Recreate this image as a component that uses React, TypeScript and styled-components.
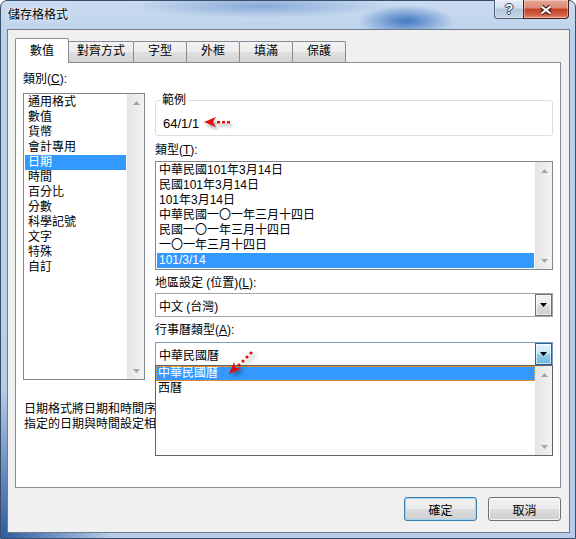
import styled, { createGlobalStyle } from "styled-components";

const GlobalStyle = createGlobalStyle`
  html, body {
    margin: 0;
    padding: 0;
    background: #fff;
  }
  body {
    width: 576px;
    height: 539px;
    overflow: hidden;
    font-family: "Liberation Sans", "Noto Sans CJK TC", sans-serif;
    font-size: 12px;
    color: #000;
  }
  * {
    box-sizing: border-box;
  }
`;

const tabs = ["數值", "對齊方式", "字型", "外框", "填滿", "保護"];

const categories = [
  "通用格式",
  "數值",
  "貨幣",
  "會計專用",
  "日期",
  "時間",
  "百分比",
  "分數",
  "科學記號",
  "文字",
  "特殊",
  "自訂",
];

const dateTypes = [
  "中華民國101年3月14日",
  "民國101年3月14日",
  "101年3月14日",
  "中華民國一〇一年三月十四日",
  "民國一〇一年三月十四日",
  "一〇一年三月十四日",
  "101/3/14",
];

const Window = styled.div`
  width: 576px;
  height: 539px;
  display: flex;
  flex-direction: column;
  border: 1px solid #3b4f6b;
  border-radius: 7px 7px 0 0;
  background:
    radial-gradient(ellipse 110px 150px at 0% 100%, rgba(38, 84, 156, 0.95), rgba(38, 84, 156, 0)),
    radial-gradient(ellipse 48px 16px at 405px 20px, rgba(52, 110, 190, 0.9), rgba(52, 110, 190, 0)),
    radial-gradient(ellipse 130px 12px at 260px 5px, rgba(110, 150, 205, 0.7), rgba(110, 150, 205, 0)),
    linear-gradient(180deg, #c9dbf0 0, #bad0ea 40px, #b6cce8 100%);
`;

const TitleBar = styled.div`
  height: 28px;
  flex: none;
  display: flex;
  justify-content: space-between;
  align-items: flex-start;
  padding-left: 7px;
`;

const Title = styled.div`
  margin-top: 7px;
  line-height: 14px;
  text-shadow: 0 0 6px rgba(255, 255, 255, 0.9), 0 0 2px #fff;
`;

const CaptionButtons = styled.div`
  display: flex;
  margin: -1px 6px 0 0;
`;

const CaptionButton = styled.div<{ $kind: "help" | "close" }>`
  width: ${(p) => (p.$kind === "help" ? 29 : 46)}px;
  height: 19px;
  display: flex;
  align-items: center;
  justify-content: center;
  border: 1px solid ${(p) => (p.$kind === "help" ? "#4c5d73" : "#4a1f1a")};
  border-top: none;
  border-right: ${(p) => (p.$kind === "help" ? "none" : undefined)};
  border-radius: ${(p) => (p.$kind === "help" ? "0 0 0 4px" : "0 0 4px 0")};
  background: ${(p) =>
    p.$kind === "help"
      ? "linear-gradient(#e6edf6 0%, #d2deed 45%, #b4c6dc 50%, #c6d6ea 100%)"
      : "linear-gradient(#e9a797 0%, #db8a77 45%, #c43d22 50%, #cf634a 85%, #e69b80 100%)"};
  box-shadow: inset 0 0 0 1px rgba(255, 255, 255, 0.35);
`;

const HelpGlyph = styled.span`
  font-family: "Liberation Sans", sans-serif;
  font-weight: bold;
  font-size: 14px;
  line-height: 14px;
  color: #fff;
  text-shadow: 1px 0 #2b3b52, -1px 0 #2b3b52, 0 1px #2b3b52, 0 -1px #2b3b52;
`;

const Client = styled.div`
  flex: 1;
  margin: 0 5px 5px 6px;
  background: #f0f0f0;
  border: 1px solid #6d7b8d;
  display: flex;
  flex-direction: column;
  padding: 8px 8px 11px 7px;
`;

const TabStrip = styled.div`
  height: 24px;
  flex: none;
  display: flex;
  align-items: flex-end;
`;

const Tab = styled.div<{ $active?: boolean }>`
  position: relative;
  z-index: ${(p) => (p.$active ? 2 : 1)};
  height: ${(p) => (p.$active ? 25 : 21)}px;
  min-width: 54px;
  margin: 0 0 ${(p) => (p.$active ? -1 : 0)}px -1px;
  padding: 0 8px ${(p) => (p.$active ? 5 : 4)}px;
  display: flex;
  align-items: flex-end;
  justify-content: center;
  line-height: 14px;
  border: 1px solid #898c95;
  border-bottom: none;
  border-radius: 2px 2px 0 0;
  background: ${(p) =>
    p.$active ? "#fff" : "linear-gradient(#f3f3f3 0%, #ececec 50%, #e0e0e0 50%, #d3d3d3 100%)"};

  &:first-child {
    margin-left: 0;
  }
`;

const Panel = styled.div`
  height: 426px;
  flex: none;
  border: 1px solid #898c95;
  background: #fff;
  padding: 9px 7px 0;
  overflow: hidden;
`;

const Columns = styled.div`
  display: grid;
  grid-template-columns: 122px 398px;
  grid-template-rows: 14px auto;
  grid-template-areas:
    "lbl ."
    "list right";
  column-gap: 10px;
  row-gap: 7px;
  align-items: start;
`;

const Label = styled.div<{ $gap?: number }>`
  line-height: 14px;
  margin-top: ${(p) => p.$gap ?? 0}px;
  white-space: nowrap;
`;

const CategoryLabel = styled(Label)`
  grid-area: lbl;
`;

const ListBox = styled.div<{ $h: number; $gap?: number }>`
  height: ${(p) => p.$h}px;
  margin-top: ${(p) => p.$gap ?? 0}px;
  border: 1px solid #828790;
  background: #fff;
  display: flex;
`;

const CategoryList = styled(ListBox)`
  grid-area: list;
`;

const Items = styled.div`
  flex: 1;
  padding: 1px;
  overflow: hidden;
`;

const Item = styled.div<{ $selected?: boolean; $pad?: number; $focus?: boolean }>`
  height: 15px;
  line-height: ${(p) => (p.$focus ? 13 : 15)}px;
  padding-left: ${(p) => p.$pad ?? 2}px;
  white-space: nowrap;
  background: ${(p) => (p.$selected ? "#3399ff" : "transparent")};
  color: ${(p) => (p.$selected ? "#fff" : "#000")};
  border: ${(p) => (p.$focus ? "1px dotted #f0a045" : "none")};
`;

const ScrollBar = styled.div`
  width: 17px;
  flex: none;
  display: flex;
  flex-direction: column;
  justify-content: space-between;
  background: linear-gradient(to right, #e6e6e6, #f2f2f2);
  border-left: 1px solid #e2e2e2;
`;

const ScrollArrow = styled.div`
  height: 17px;
  display: flex;
  align-items: center;
  justify-content: center;
`;

const RightColumn = styled.div`
  grid-area: right;
  display: flex;
  flex-direction: column;
`;

const GroupBox = styled.fieldset`
  margin: 0;
  padding: 4px 7px 0;
  border: 1px solid #d5dfe5;
  border-radius: 3px;
`;

const GroupLegend = styled.legend`
  margin-left: -3px;
  padding: 0 2px;
  line-height: 14px;
`;

const SampleRow = styled.div`
  height: 24px;
  display: flex;
  align-items: center;
  gap: 4px;
  font-size: 13px;
`;

const ComboWrap = styled.div<{ $gap?: number }>`
  position: relative;
  margin-top: ${(p) => p.$gap ?? 0}px;
`;

const Combo = styled.div<{ $open?: boolean }>`
  height: 24px;
  display: flex;
  align-items: stretch;
  border: 1px solid ${(p) => (p.$open ? "#7f9dbf" : "#a3a3a3")};
  background: #fff;
`;

const ComboText = styled.div`
  flex: 1;
  padding-left: 3px;
  display: flex;
  align-items: center;
`;

const DropButton = styled.div<{ $open?: boolean }>`
  width: 17px;
  display: flex;
  align-items: center;
  justify-content: center;
  border: 1px solid ${(p) => (p.$open ? "#2c628b" : "#707070")};
  background: ${(p) =>
    p.$open
      ? "linear-gradient(#e5f4fc 0%, #c4e5f6 50%, #98d1ef 50%, #68b3db 100%)"
      : "linear-gradient(#f2f2f2 0%, #ebebeb 50%, #dddddd 50%, #cfcfcf 100%)"};
  box-shadow: inset 0 0 0 1px rgba(255, 255, 255, 0.6);
`;

const DropList = styled.div`
  position: absolute;
  z-index: 5;
  top: calc(100% - 1px);
  left: 0;
  right: 0;
  height: 91px;
  display: flex;
  border: 1px solid #646464;
  background: #fff;
`;

const DropItems = styled.div`
  flex: 1;
  overflow: hidden;
`;

const CallOut = styled.svg`
  position: absolute;
  z-index: 6;
  left: 70px;
  top: 6px;
  overflow: visible;
`;

const Description = styled.div`
  margin: 22px 0 0 1px;
  line-height: 15px;
  white-space: nowrap;
`;

const Footer = styled.div`
  margin-top: 9px;
  display: flex;
  justify-content: flex-end;
  gap: 11px;
`;

const PushButton = styled.button<{ $default?: boolean }>`
  width: 73px;
  height: 24px;
  padding: 0;
  font: inherit;
  color: #000;
  border: 1px solid ${(p) => (p.$default ? "#3c7fb1" : "#707070")};
  border-radius: 3px;
  background: linear-gradient(#f2f2f2 0%, #ebebeb 50%, #dddddd 50%, #cfcfcf 100%);
  box-shadow: inset 0 0 0 1px ${(p) => (p.$default ? "#9fd6f5" : "rgba(255, 255, 255, 0.75)")};
`;

function Triangle({ up, color }: { up?: boolean; color: string }) {
  return (
    <svg width="7" height="4" viewBox="0 0 7 4">
      <path d={up ? "M0 4h7L3.5 0z" : "M0 0h7L3.5 4z"} fill={color} />
    </svg>
  );
}

function Scroll() {
  return (
    <ScrollBar>
      <ScrollArrow>
        <Triangle up color="#a4a4a4" />
      </ScrollArrow>
      <ScrollArrow>
        <Triangle color="#a4a4a4" />
      </ScrollArrow>
    </ScrollBar>
  );
}

function SampleArrow() {
  return (
    <svg width="32" height="16" viewBox="0 0 32 16">
      <defs>
        <filter id="sh1" x="-20%" y="-40%" width="160%" height="200%">
          <feDropShadow dx="2" dy="3" stdDeviation="1.6" floodColor="#000" floodOpacity="0.35" />
        </filter>
      </defs>
      <g fill="#e30b0b" filter="url(#sh1)">
        <polygon points="1,7 13,2 10,7 13,12" />
        <rect x="14" y="6" width="3" height="2.5" />
        <rect x="19" y="6" width="3" height="2.5" />
        <rect x="24" y="6" width="3" height="2.5" />
      </g>
    </svg>
  );
}

export default function App() {
  return (
    <>
      <GlobalStyle />
      <Window>
        <TitleBar>
          <Title>儲存格格式</Title>
          <CaptionButtons>
            <CaptionButton $kind="help">
              <HelpGlyph>?</HelpGlyph>
            </CaptionButton>
            <CaptionButton $kind="close">
              <svg width="14" height="10" viewBox="0 0 14 10" style={{ marginTop: 2 }}>
                <path d="M2.5 1.5L11.5 8.5M11.5 1.5L2.5 8.5" stroke="#3a201c" strokeWidth="4.4" />
                <path d="M2.5 1.5L11.5 8.5M11.5 1.5L2.5 8.5" stroke="#fff" strokeWidth="2.2" />
              </svg>
            </CaptionButton>
          </CaptionButtons>
        </TitleBar>

        <Client>
          <TabStrip>
            {tabs.map((t, i) => (
              <Tab key={t} $active={i === 0}>
                {t}
              </Tab>
            ))}
          </TabStrip>

          <Panel>
            <Columns>
              <CategoryLabel>
                類別(<u>C</u>):
              </CategoryLabel>
              <CategoryList $h={287}>
                <Items>
                  {categories.map((c) => (
                    <Item key={c} $pad={3} $selected={c === "日期"}>
                      {c}
                    </Item>
                  ))}
                </Items>
                <Scroll />
              </CategoryList>

              <RightColumn>
                <GroupBox>
                  <GroupLegend>範例</GroupLegend>
                  <SampleRow>
                    64/1/1
                    <SampleArrow />
                  </SampleRow>
                </GroupBox>

                <Label $gap={7}>
                  類型(<u>T</u>):
                </Label>
                <ListBox $h={109} $gap={4}>
                  <Items>
                    {dateTypes.map((d) => (
                      <Item key={d} $selected={d === "101/3/14"}>
                        {d}
                      </Item>
                    ))}
                  </Items>
                  <Scroll />
                </ListBox>

                <Label $gap={6}>
                  地區設定 (位置)(<u>L</u>):
                </Label>
                <ComboWrap $gap={3}>
                  <Combo>
                    <ComboText>中文 (台灣)</ComboText>
                    <DropButton>
                      <Triangle color="#000" />
                    </DropButton>
                  </Combo>
                </ComboWrap>

                <Label $gap={6}>
                  行事曆類型(<u>A</u>):
                </Label>
                <ComboWrap $gap={5}>
                  <Combo $open>
                    <ComboText>中華民國曆</ComboText>
                    <DropButton $open>
                      <Triangle color="#000" />
                    </DropButton>
                  </Combo>
                  <DropList>
                    <DropItems>
                      <Item $selected $focus $pad={1}>
                        中華民國曆
                      </Item>
                      <Item $pad={2}>西曆</Item>
                    </DropItems>
                    <Scroll />
                  </DropList>
                  <CallOut width="32" height="32" viewBox="0 0 32 32">
                    <defs>
                      <filter id="sh2" x="-40%" y="-40%" width="200%" height="200%">
                        <feDropShadow dx="3" dy="3" stdDeviation="2" floodColor="#000" floodOpacity="0.4" />
                      </filter>
                    </defs>
                    <g fill="#e30b0b" filter="url(#sh2)">
                      <polygon points="4,26 9,14 10.5,19.5 16,21" />
                      <circle cx="14" cy="17" r="1.6" />
                      <circle cx="18" cy="13" r="1.6" />
                      <circle cx="22" cy="9" r="1.6" />
                      <circle cx="26" cy="5" r="1.6" />
                    </g>
                  </CallOut>
                </ComboWrap>
              </RightColumn>
            </Columns>

            <Description>
              日期格式將日期和時間序列值顯示為日期值。以星號 (*) 開頭的日期格式會回應作業系統
              <br />
              指定的日期與時間設定相關的變更。
            </Description>
          </Panel>

          <Footer>
            <PushButton $default>確定</PushButton>
            <PushButton>取消</PushButton>
          </Footer>
        </Client>
      </Window>
    </>
  );
}
